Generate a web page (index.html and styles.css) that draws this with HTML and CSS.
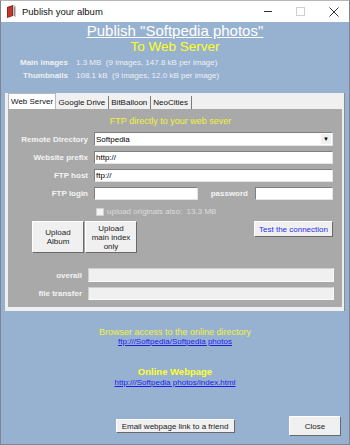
FILE: index.html
```html
<!DOCTYPE html>
<html>
<head>
  <title>Publish your album</title>
  <link rel="stylesheet" href="styles.css">
</head>
<body>
  <div class="window">
    <div class="titlebar">
      <svg class="app-icon" width="11" height="13" viewBox="0 0 11 13">
        <path d="M1 2 L7 0 L7 11 L1 13 Z" fill="#9b2222"/>
        <path d="M7 0 L10 1 L10 12 L7 11 Z" fill="#c9c9c9"/>
        <path d="M2 3 L6 1.8 L6 10.5 L2 11.8 Z" fill="#c0392b"/>
        <path d="M8 2 L9 2.4 L9 11 L8 10.6 Z" fill="#888"/>
      </svg>
      <span class="title">Publish your album</span>
      <div class="win-buttons">
        <span class="win-min"></span>
        <span class="win-max"></span>
        <svg class="win-close" width="10" height="10" viewBox="0 0 10 10">
          <path d="M0.5 0.5 L9.5 9.5 M9.5 0.5 L0.5 9.5" stroke="#333" stroke-width="1"/>
        </svg>
      </div>
    </div>

    <div class="client">
      <h1 class="heading">Publish "Softpedia photos"</h1>
      <h2 class="subheading">To Web Server</h2>

      <div class="stats">
        <span class="stat-label">Main images</span>
        <span class="stat-value">1.3 MB&nbsp; (9 images, 147.8 kB per image)</span>
        <span class="stat-label">Thumbnails</span>
        <span class="stat-value">108.1 kB&nbsp; (9 images, 12.0 kB per image)</span>
      </div>

      <div class="tabs">
        <div class="tab-strip">
          <span class="tab active">Web Server</span>
          <span class="tab">Google Drive</span>
          <span class="tab">BitBalloon</span>
          <span class="tab">NeoCities</span>
        </div>
        <div class="panel">
          <div class="panel-title">FTP directly to your web sever</div>

          <div class="form">
            <label class="field-label">Remote Directory</label>
            <div class="select">
              <span class="select-text">Softpedia</span>
              <span class="select-arrow">&#9660;</span>
            </div>

            <label class="field-label">Website prefix</label>
            <div class="input">http://</div>

            <label class="field-label">FTP host</label>
            <div class="input">ftp://</div>

            <label class="field-label">FTP login</label>
            <div class="login-row">
              <div class="input login"></div>
              <label class="field-label password-label">password</label>
              <div class="input password"></div>
            </div>

            <span></span>
            <div class="check-row">
              <span class="checkbox"></span>
              <span class="check-text">upload originals also:&nbsp; 13.3 MB</span>
            </div>
          </div>

          <div class="actions">
            <button class="btn upload">Upload<br>Album</button>
            <button class="btn upload">Upload<br>main index<br>only</button>
            <button class="btn test">Test the connection</button>
          </div>

          <div class="progress">
            <label class="field-label">overall</label>
            <div class="bar"></div>
            <label class="field-label">file transfer</label>
            <div class="bar small"></div>
          </div>
        </div>
      </div>

      <div class="access">
        <div class="access-title">Browser access to the online directory</div>
        <a class="link" href="#">ftp:///Softpedia/Softpedia photos</a>
        <div class="webpage-title">Online Webpage</div>
        <a class="link" href="#">http:///Softpedia photos/index.html</a>
      </div>

      <div class="footer">
        <button class="btn email">Email webpage link to a friend</button>
        <button class="btn close">Close</button>
      </div>
    </div>
  </div>
</body>
</html>
```

FILE: styles.css
```css
body {
  margin: 0;
  padding: 0;
  font-family: "Liberation Sans", Arial, sans-serif;
  font-size: 8px;
  background-color: #fff;
}

.window {
  width: 350px;
  height: 445px;
  box-sizing: border-box;
  border: 1px solid #7d8793;
  border-top-color: #b5b5b5;
  display: flex;
  flex-direction: column;
}

/* title bar */
.titlebar {
  height: 21px;
  background-color: #fff;
  display: flex;
  align-items: center;
  padding-left: 5px;
}

.app-icon {
  margin-right: 5px;
}

.title {
  font-size: 9.5px;
  color: #111;
}

.win-buttons {
  margin-left: auto;
  display: flex;
  align-items: center;
}

.win-min {
  width: 8px;
  height: 1px;
  background-color: #333;
  margin-right: 24px;
}

.win-max {
  width: 7px;
  height: 7px;
  border: 1px solid #cfcfcf;
  margin-right: 24px;
}

.win-close {
  margin-right: 10px;
}

/* client area */
.client {
  flex: 1;
  background-color: #97b1d0;
  display: flex;
  flex-direction: column;
}

.heading {
  margin: 1px 0 0;
  font-size: 15px;
  line-height: 16px;
  font-weight: normal;
  color: #fff;
  text-align: center;
  text-decoration: underline;
  text-underline-offset: 1px;
}

.subheading {
  margin: 0;
  font-size: 13.5px;
  line-height: 15px;
  font-weight: normal;
  color: #ffff1a;
  text-align: center;
}

.stats {
  margin-top: 2px;
  display: grid;
  grid-template-columns: 67px auto;
  column-gap: 8px;
  line-height: 13px;
  color: #eef0f3;
}

.stat-label {
  text-align: right;
  font-weight: bold;
}

/* tab control */
.tabs {
  margin: 11px 4px 0;
  background-color: #f0f0f0;
  border-right: 1px solid #8d8d8d;
  padding: 0 2px 4px 3px;
}

.tab-strip {
  height: 16px;
  display: flex;
  align-items: flex-end;
}

.tab {
  height: 13px;
  line-height: 13px;
  padding: 0 2.5px;
  border-right: 1px solid #7a7a7a;
  color: #111;
}

.tab.active {
  height: 16px;
  line-height: 16px;
  background-color: #fff;
  border: 1px solid #b8b8b8;
  border-bottom: none;
  box-sizing: border-box;
  padding: 0 2px;
}

.panel {
  background-color: #a9a9a9;
  padding: 6px 9px 7px 0;
}

.panel-title {
  text-align: center;
  font-size: 9px;
  line-height: 12px;
  color: #f2f23a;
}

.form {
  margin-top: 5px;
  display: grid;
  grid-template-columns: 80px 1fr;
  column-gap: 6px;
  row-gap: 5px;
  grid-template-rows: 14px 13px 13px 13px 13px;
  align-items: center;
}

.field-label {
  text-align: right;
  font-weight: bold;
  color: #f4f4f4;
}

.input, .select {
  height: 100%;
  box-sizing: border-box;
  background-color: #fff;
  border: 1px solid #e4e4e4;
  border-top-color: #7f7f7f;
  border-left-color: #7f7f7f;
  padding-left: 1px;
  line-height: 11px;
  color: #000;
}

.select {
  display: flex;
  align-items: center;
  padding-right: 1px;
}

.select-arrow {
  margin-left: auto;
  width: 10px;
  height: 10px;
  background-color: #f0f0f0;
  font-size: 6px;
  line-height: 10px;
  text-align: center;
}

.login-row {
  height: 100%;
  display: flex;
  align-items: center;
}

.input.login {
  width: 104px;
}

.password-label {
  flex: 1;
  padding-right: 7px;
}

.input.password {
  width: 78px;
}

.check-row {
  display: flex;
  align-items: center;
  padding-left: 2px;
}

.checkbox {
  width: 8px;
  height: 8px;
  box-sizing: border-box;
  background-color: #f4f4f4;
  border: 1px solid #d0d0d0;
  margin-right: 3px;
}

.check-text {
  color: #dcdcdc;
}

.btn {
  font-family: "Liberation Sans", Arial, sans-serif;
  font-size: 8px;
  line-height: 9px;
  background-color: #f0f0f0;
  color: #222;
  border: 1px solid #fff;
  border-right-color: #696969;
  border-bottom-color: #696969;
  padding: 0;
  box-sizing: border-box;
}

.actions {
  margin-top: 3px;
  padding-left: 24px;
  display: flex;
  align-items: flex-start;
  gap: 1px;
}

.btn.upload {
  width: 52px;
  height: 32px;
}

.btn.test {
  margin-left: auto;
  width: 79px;
  height: 16px;
  color: #2c2cf0;
}

.progress {
  margin-top: 15px;
  display: grid;
  grid-template-columns: 74px 1fr;
  grid-template-rows: 14px 13px;
  column-gap: 6px;
  row-gap: 5px;
  align-items: center;
  margin-right: -1px;
}

.bar {
  height: 100%;
  box-sizing: border-box;
  background-color: #f0f0f0;
  border: 1px solid #fafafa;
  border-top-color: #cfcfcf;
  border-left-color: #cfcfcf;
}

/* links under the tabs */
.access {
  margin-top: 16px;
  display: flex;
  flex-direction: column;
  align-items: center;
  line-height: 10px;
}

.access-title {
  font-size: 9px;
  color: #f2f23a;
}

.link {
  color: #1c1cf2;
  text-decoration: underline;
}

.webpage-title {
  margin-top: 19px;
  font-size: 9.5px;
  line-height: 12px;
  font-weight: bold;
  color: #ffff2e;
}

.footer {
  margin-top: 28px;
  height: 20px;
  display: grid;
  grid-template-columns: 1fr auto 1fr;
  align-items: center;
}

.btn.email {
  grid-column: 2;
  width: 119px;
  height: 14px;
}

.btn.close {
  justify-self: end;
  margin-right: 8px;
  width: 52px;
  height: 20px;
}
```
